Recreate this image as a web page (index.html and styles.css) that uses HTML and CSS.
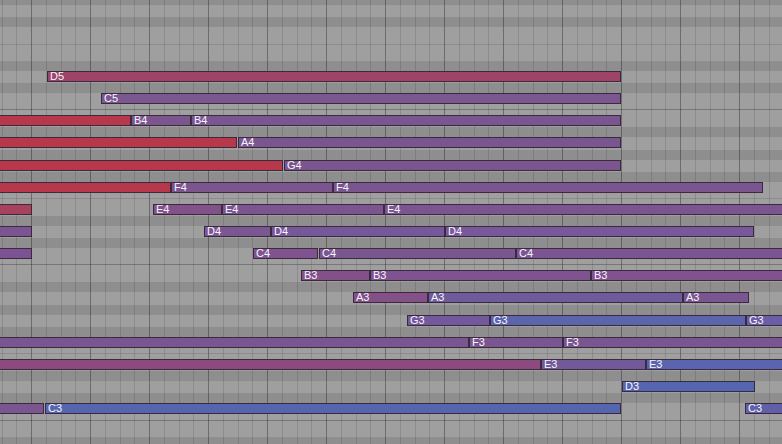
FILE: index.html
```html
<!DOCTYPE html>
<html>
<head>
<meta charset="utf-8">
<title>Piano roll</title>
<link rel="stylesheet" href="styles.css">
</head>
<body>
<div class="roll">
  <div class="row black first"></div>
  <div class="row white"></div>
  <div class="row black"></div>
  <div class="row white"></div>
  <div class="row gap ef"></div>
  <div class="row white"></div>
  <div class="row black"></div>
  <div class="row white">
    <div class="note" style="left:47px;width:574px;background:#9e4468"><span>D5</span></div>
  </div>
  <div class="row black"></div>
  <div class="row white">
    <div class="note" style="left:101px;width:520px;background:#7a5790"><span>C5</span></div>
  </div>
  <div class="row gap bc"></div>
  <div class="row white">
    <div class="note" style="left:-2px;width:133px;background:#b7374b"></div>
    <div class="note" style="left:131px;width:60px;background:#7b558e"><span>B4</span></div>
    <div class="note" style="left:191px;width:430px;background:#7a5690"><span>B4</span></div>
  </div>
  <div class="row black"></div>
  <div class="row white">
    <div class="note" style="left:-2px;width:239px;background:#b7374b"></div>
    <div class="note" style="left:238px;width:383px;background:#7a5690"><span>A4</span></div>
  </div>
  <div class="row black"></div>
  <div class="row white">
    <div class="note" style="left:-2px;width:285px;background:#b7374b"></div>
    <div class="note" style="left:284px;width:337px;background:#7c558e"><span>G4</span></div>
  </div>
  <div class="row black"></div>
  <div class="row white">
    <div class="note" style="left:-2px;width:173px;background:#b7374b"></div>
    <div class="note" style="left:171px;width:162px;background:#7c548e"><span>F4</span></div>
    <div class="note" style="left:333px;width:430px;background:#7a5690"><span>F4</span></div>
  </div>
  <div class="row gap ef"></div>
  <div class="row white">
    <div class="note" style="left:-2px;width:34px;background:#a6425e"></div>
    <div class="note" style="left:153px;width:69px;background:#81518a"><span>E4</span></div>
    <div class="note" style="left:222px;width:162px;background:#7b5590"><span>E4</span></div>
    <div class="note" style="left:384px;width:410px;background:#7a5590"><span>E4</span></div>
  </div>
  <div class="row black"></div>
  <div class="row white">
    <div class="note" style="left:-2px;width:34px;background:#7c5492"></div>
    <div class="note" style="left:204px;width:67px;background:#7a5692"><span>D4</span></div>
    <div class="note" style="left:271px;width:174px;background:#74589a"><span>D4</span></div>
    <div class="note" style="left:445px;width:309px;background:#77589a"><span>D4</span></div>
  </div>
  <div class="row black"></div>
  <div class="row white">
    <div class="note" style="left:-2px;width:34px;background:#7c5294"></div>
    <div class="note" style="left:253px;width:65px;background:#7f5290"><span>C4</span></div>
    <div class="note" style="left:319px;width:197px;background:#7a5690"><span>C4</span></div>
    <div class="note" style="left:516px;width:280px;background:#7b5492"><span>C4</span></div>
  </div>
  <div class="row gap bc"></div>
  <div class="row white">
    <div class="note" style="left:301px;width:69px;background:#83508a"><span>B3</span></div>
    <div class="note" style="left:370px;width:221px;background:#7e5390"><span>B3</span></div>
    <div class="note" style="left:591px;width:200px;background:#81528e"><span>B3</span></div>
  </div>
  <div class="row black"></div>
  <div class="row white">
    <div class="note" style="left:353px;width:75px;background:#835088"><span>A3</span></div>
    <div class="note" style="left:428px;width:255px;background:#6d5b9c"><span>A3</span></div>
    <div class="note" style="left:683px;width:66px;background:#7a5690"><span>A3</span></div>
  </div>
  <div class="row black"></div>
  <div class="row white">
    <div class="note" style="left:407px;width:83px;background:#72589c"><span>G3</span></div>
    <div class="note" style="left:490px;width:256px;background:#5b65ae"><span>G3</span></div>
    <div class="note" style="left:746px;width:50px;background:#6a5ea6"><span>G3</span></div>
  </div>
  <div class="row black"></div>
  <div class="row white">
    <div class="note" style="left:-2px;width:471px;background:#7a5690"></div>
    <div class="note" style="left:469px;width:94px;background:#7a5690"><span>F3</span></div>
    <div class="note" style="left:563px;width:230px;background:#7a5690"><span>F3</span></div>
  </div>
  <div class="row gap ef"></div>
  <div class="row white">
    <div class="note" style="left:-2px;width:543px;background:#8d4a7e"></div>
    <div class="note" style="left:541px;width:105px;background:#72599a"><span>E3</span></div>
    <div class="note" style="left:646px;width:150px;background:#5b64ae"><span>E3</span></div>
  </div>
  <div class="row black"></div>
  <div class="row white">
    <div class="note" style="left:622px;width:133px;background:#5566b0"><span>D3</span></div>
  </div>
  <div class="row black"></div>
  <div class="row white">
    <div class="note" style="left:-2px;width:46px;background:#7a5690"></div>
    <div class="note" style="left:45px;width:576px;background:#5566b0"><span>C3</span></div>
    <div class="note" style="left:745px;width:50px;background:#6060a8"><span>C3</span></div>
  </div>
  <div class="row gap bc"></div>
  <div class="row white"></div>
  <div class="row black last"></div>
</div>
</body>
</html>
```
FILE: styles.css
```css
html, body {
  margin: 0;
  padding: 0;
  background: #9f9f9f;
}

.roll {
  width: 782px;
  height: 444px;
  overflow: hidden;
  display: flex;
  flex-direction: column;
  background-color: #9f9f9f;
  background-image: linear-gradient(90deg,
    #6c6c6c 0, #6c6c6c 1px,
    transparent 1px, transparent 15px,
    #8c8c8c 15px, #8c8c8c 16px,
    transparent 16px, transparent 30px,
    #8c8c8c 30px, #8c8c8c 31px,
    transparent 31px, transparent 44px,
    #8c8c8c 44px, #8c8c8c 45px,
    transparent 45px);
  background-size: 59px 100%;
  background-position: 31px 0;
  background-repeat: repeat-x;
  font-family: "Liberation Sans", Arial, sans-serif;
}

.row {
  position: relative;
  flex: none;
}

.white {
  height: 12.15px;
}

.black {
  height: 10px;
  background: rgba(0, 0, 0, 0.1);
}

.black.first {
  height: 4.55px;
}

.black.last {
  height: 12px;
}

.gap {
  height: 10px;
}

.gap.ef {
  background: linear-gradient(to bottom, transparent 4.5px, rgba(0, 0, 0, 0.12) 4.5px, rgba(0, 0, 0, 0.12) 5.5px, transparent 5.5px);
}

.gap.bc {
  background: linear-gradient(to bottom, transparent 4.5px, rgba(0, 0, 0, 0.25) 4.5px, rgba(0, 0, 0, 0.25) 5.5px, transparent 5.5px);
}

.note {
  position: absolute;
  top: 0;
  height: 11px;
  box-sizing: border-box;
  border: 1px solid #3c2a3c;
  padding-left: 2px;
  overflow: hidden;
  white-space: nowrap;
}

.note span {
  display: block;
  color: #f6f4ff;
  font-size: 11px;
  line-height: 9px;
}
```
